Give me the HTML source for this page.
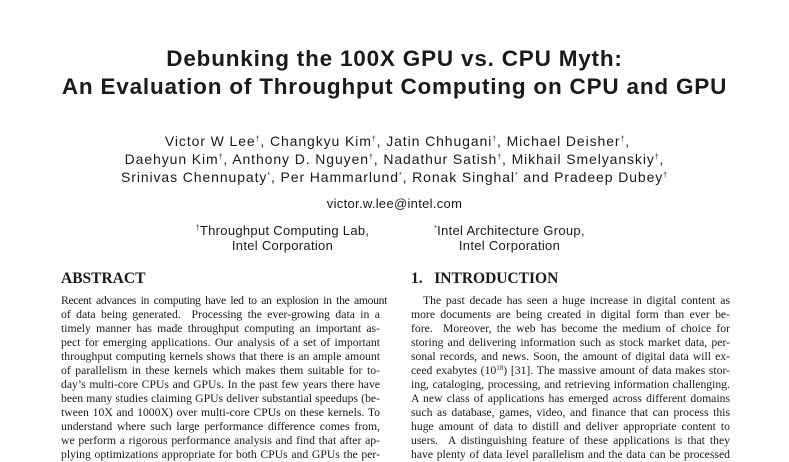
<!DOCTYPE html>
<html><head><meta charset="utf-8"><style>
body{margin:0;width:789px;height:450px;background:#fff;overflow:hidden;position:relative;color:#111}
.s{font-family:"Liberation Sans",sans-serif;position:absolute;left:0;width:789px;text-align:center;white-space:nowrap}
.t{font-size:22.5px;font-weight:bold;color:#1a1a1a;letter-spacing:0.8px}
.a{font-size:14px;color:#1a1a1a;letter-spacing:0.9px}
sup{font-size:7px;vertical-align:5px}
.l{position:absolute;font-family:"Liberation Serif",serif;font-size:11.7px;text-align:justify;text-align-last:justify;line-height:14px;height:14px;overflow:hidden;color:#1a1a1a}
.h{position:absolute;font-family:"Liberation Serif",serif;font-weight:bold;font-size:15.5px;color:#1a1a1a}
</style></head><body>
<div class="s t" style="top:46px">Debunking the 100X GPU vs. CPU Myth:</div>
<div class="s t" style="top:74px">An Evaluation of Throughput Computing on CPU and GPU</div>
<div class="s a" style="top:133px;left:3px">Victor W Lee<sup>†</sup>, Changkyu Kim<sup>†</sup>, Jatin Chhugani<sup>†</sup>, Michael Deisher<sup>†</sup>,</div>
<div class="s a" style="top:151px">Daehyun Kim<sup>†</sup>, Anthony D. Nguyen<sup>†</sup>, Nadathur Satish<sup>†</sup>, Mikhail Smelyanskiy<sup>†</sup>,</div>
<div class="s a" style="top:169px">Srinivas Chennupaty<sup>*</sup>, Per Hammarlund<sup>*</sup>, Ronak Singhal<sup>*</sup> and Pradeep Dubey<sup>†</sup></div>
<div class="s a" style="top:196px;font-size:13px;letter-spacing:0.3px">victor.w.lee@intel.com</div>
<div class="s a" style="top:223px;left:-112px;font-size:13px;letter-spacing:0.3px"><sup>†</sup>Throughput Computing Lab,</div>
<div class="s a" style="top:238px;left:-112px;font-size:13px;letter-spacing:0.3px">Intel Corporation</div>
<div class="s a" style="top:223px;left:115px;font-size:13px;letter-spacing:0.3px"><sup>*</sup>Intel Architecture Group,</div>
<div class="s a" style="top:238px;left:115px;font-size:13px;letter-spacing:0.3px">Intel Corporation</div>

<div class="h" style="left:61px;top:270px">ABSTRACT</div>
<div class="h" style="left:411px;top:270px">1.&nbsp;&nbsp;&nbsp;INTRODUCTION</div>

<div class="l" style="left:61px;top:294px;width:326px;letter-spacing:-0.35px;word-spacing:-1px">Recent advances in computing have led to an explosion in the amount</div>
<div class="l" style="left:61px;top:308px;width:319px">of data being generated. &nbsp;Processing the ever-growing data in a</div>
<div class="l" style="left:61px;top:322px;width:319px">timely manner has made throughput computing an important as-</div>
<div class="l" style="left:61px;top:336px;width:319px">pect for emerging applications. Our analysis of a set of important</div>
<div class="l" style="left:61px;top:350px;width:319px">throughput computing kernels shows that there is an ample amount</div>
<div class="l" style="left:61px;top:364px;width:319px">of parallelism in these kernels which makes them suitable for to-</div>
<div class="l" style="left:61px;top:378px;width:319px">day’s multi-core CPUs and GPUs. In the past few years there have</div>
<div class="l" style="left:61px;top:392px;width:319px">been many studies claiming GPUs deliver substantial speedups (be-</div>
<div class="l" style="left:61px;top:406px;width:319px">tween 10X and 1000X) over multi-core CPUs on these kernels. To</div>
<div class="l" style="left:61px;top:420px;width:319px">understand where such large performance difference comes from,</div>
<div class="l" style="left:61px;top:434px;width:319px">we perform a rigorous performance analysis and find that after ap-</div>
<div class="l" style="left:61px;top:448px;width:319px">plying optimizations appropriate for both CPUs and GPUs the per-</div>

<div class="l" style="left:423px;top:294px;width:307px">The past decade has seen a huge increase in digital content as</div>
<div class="l" style="left:411px;top:308px;width:319px">more documents are being created in digital form than ever be-</div>
<div class="l" style="left:411px;top:322px;width:319px">fore. &nbsp;Moreover, the web has become the medium of choice for</div>
<div class="l" style="left:411px;top:336px;width:319px">storing and delivering information such as stock market data, per-</div>
<div class="l" style="left:411px;top:350px;width:319px">sonal records, and news. Soon, the amount of digital data will ex-</div>
<div class="l" style="left:411px;top:364px;width:319px">ceed exabytes (10<sup style="font-size:7px;vertical-align:4px;line-height:0">18</sup>) [31]. The massive amount of data makes stor-</div>
<div class="l" style="left:411px;top:378px;width:319px">ing, cataloging, processing, and retrieving information challenging.</div>
<div class="l" style="left:411px;top:392px;width:319px">A new class of applications has emerged across different domains</div>
<div class="l" style="left:411px;top:406px;width:319px">such as database, games, video, and finance that can process this</div>
<div class="l" style="left:411px;top:420px;width:319px">huge amount of data to distill and deliver appropriate content to</div>
<div class="l" style="left:411px;top:434px;width:319px">users. &nbsp;A distinguishing feature of these applications is that they</div>
<div class="l" style="left:411px;top:448px;width:319px">have plenty of data level parallelism and the data can be processed</div>
</body></html>
